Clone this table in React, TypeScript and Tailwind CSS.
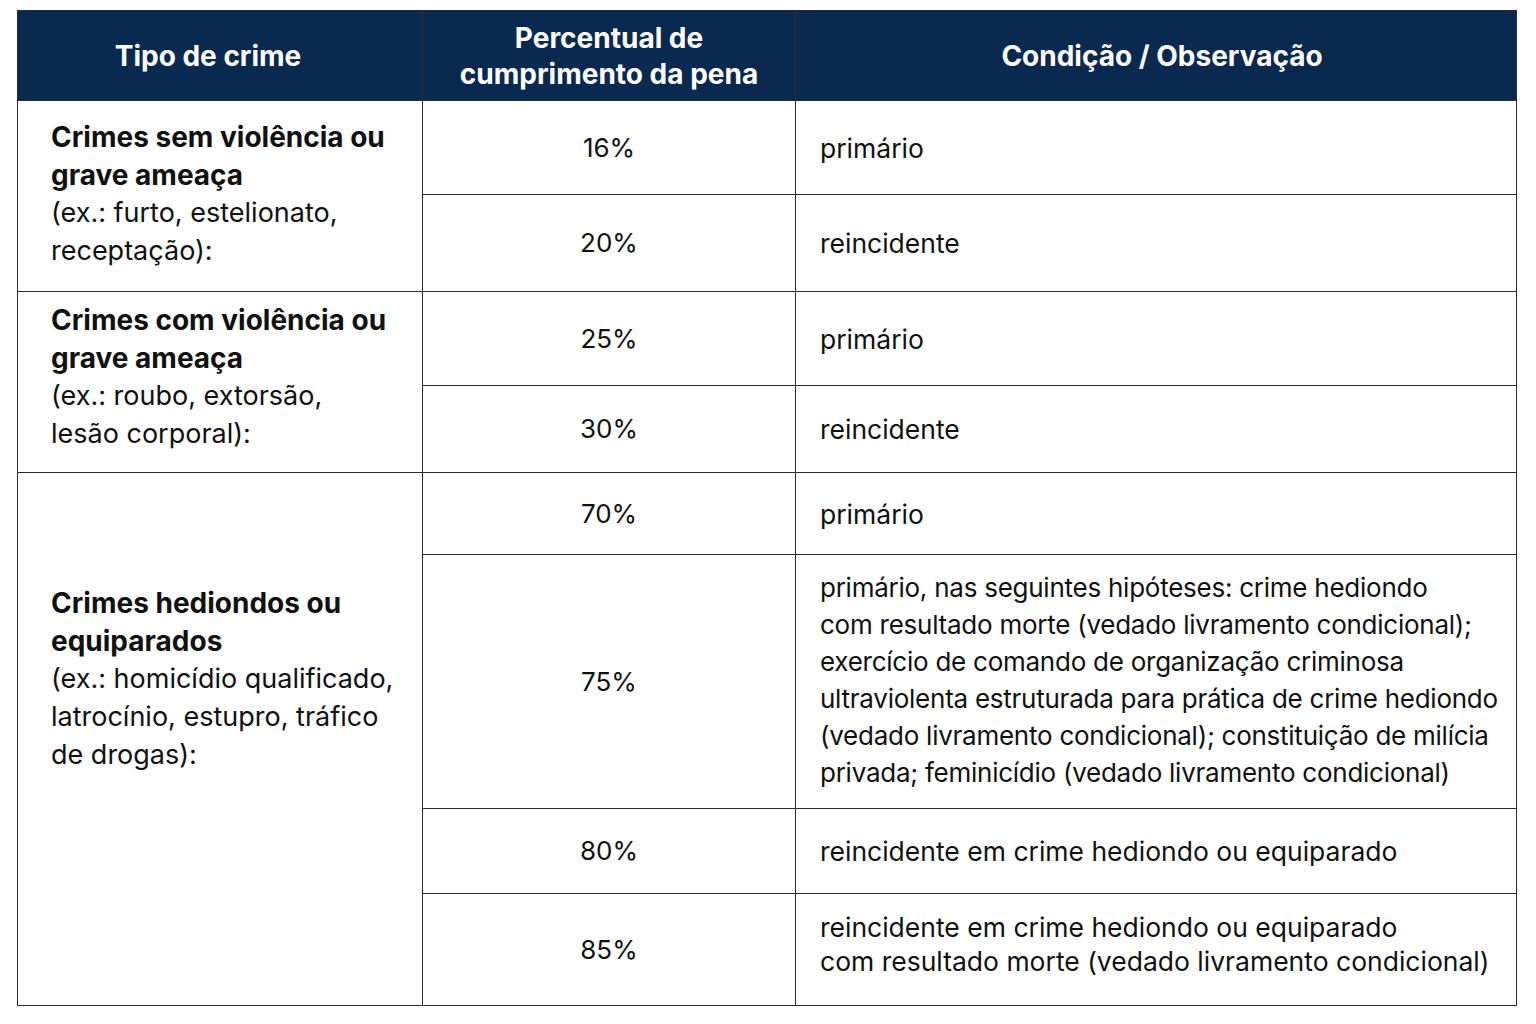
const border = "border-[1.5px] border-[#2b2b2b]";

function Pct({ v }: { v: string }) {
  return <td className={`${border} text-center align-middle text-[26px]`}>{v}</td>;
}

function Obs({ children, className = "" }: { children: React.ReactNode; className?: string }) {
  return <td className={`${border} pl-6 pr-2 align-middle whitespace-nowrap ${className}`}>{children}</td>;
}

function Group({ title, example }: { title: string[]; example: string[] }) {
  return (
    <>
      {title.map((t) => (
        <div key={t} className="font-bold text-[28px]">{t}</div>
      ))}
      {example.map((t) => (
        <div key={t} className="text-[27px]">{t}</div>
      ))}
    </>
  );
}

export default function App() {
  return (
    <div className="min-h-screen bg-white pt-[10px] pl-[17px] font-['Inter','Liberation_Sans',sans-serif] text-[26.5px] leading-[38px] text-[#111]">
      <table className="w-[1499px] table-fixed border-collapse">
        <colgroup>
          <col className="w-[405px]" />
          <col className="w-[373px]" />
          <col className="w-[721px]" />
        </colgroup>
        <thead>
          <tr className="h-[90px] bg-[#0a2951] text-white font-bold text-[28px] leading-[36px]">
            <th className={`${border} text-center pr-6`}>Tipo de crime</th>
            <th className={`${border} text-center`}>
              Percentual de
              <br />
              cumprimento da pena
            </th>
            <th className={`${border} text-center pl-3`}>Condição / Observação</th>
          </tr>
        </thead>
        <tbody>
          <tr className="h-[94px]">
            <td rowSpan={2} className={`${border} pl-[33px] pr-2 pb-1 align-middle`}>
              <Group title={["Crimes sem violência ou", "grave ameaça"]} example={["(ex.: furto, estelionato,", "receptação):"]} />
            </td>
            <Pct v="16%" />
            <Obs>primário</Obs>
          </tr>
          <tr className="h-[97px]">
            <Pct v="20%" />
            <Obs>reincidente</Obs>
          </tr>
          <tr className="h-[94px]">
            <td rowSpan={2} className={`${border} pl-[33px] pr-2 pb-[10px] align-middle`}>
              <Group title={["Crimes com violência ou", "grave ameaça"]} example={["(ex.: roubo, extorsão,", "lesão corporal):"]} />
            </td>
            <Pct v="25%" />
            <Obs>primário</Obs>
          </tr>
          <tr className="h-[87px]">
            <Pct v="30%" />
            <Obs>reincidente</Obs>
          </tr>
          <tr className="h-[82px]">
            <td rowSpan={4} className={`${border} pl-[33px] pr-2 pt-[111px] align-top`}>
              <Group
                title={["Crimes hediondos ou", "equiparados"]}
                example={["(ex.: homicídio qualificado,", "latrocínio, estupro, tráfico", "de drogas):"]}
              />
            </td>
            <Pct v="70%" />
            <Obs>primário</Obs>
          </tr>
          <tr className="h-[254px]">
            <Pct v="75%" />
            <Obs className="text-[26px] leading-[37px] tracking-[-0.25px] pb-1">
              primário, nas seguintes hipóteses: crime hediondo
              <br />
              com resultado morte (vedado livramento condicional);
              <br />
              exercício de comando de organização criminosa
              <br />
              ultraviolenta estruturada para prática de crime hediondo
              <br />
              (vedado livramento condicional); constituição de milícia
              <br />
              privada; feminicídio (vedado livramento condicional)
            </Obs>
          </tr>
          <tr className="h-[85px]">
            <Pct v="80%" />
            <Obs>reincidente em crime hediondo ou equiparado</Obs>
          </tr>
          <tr className="h-[112px]">
            <Pct v="85%" />
            <Obs className="leading-[34px] pb-3">
              reincidente em crime hediondo ou equiparado
              <br />
              com resultado morte (vedado livramento condicional)
            </Obs>
          </tr>
        </tbody>
      </table>
    </div>
  );
}
